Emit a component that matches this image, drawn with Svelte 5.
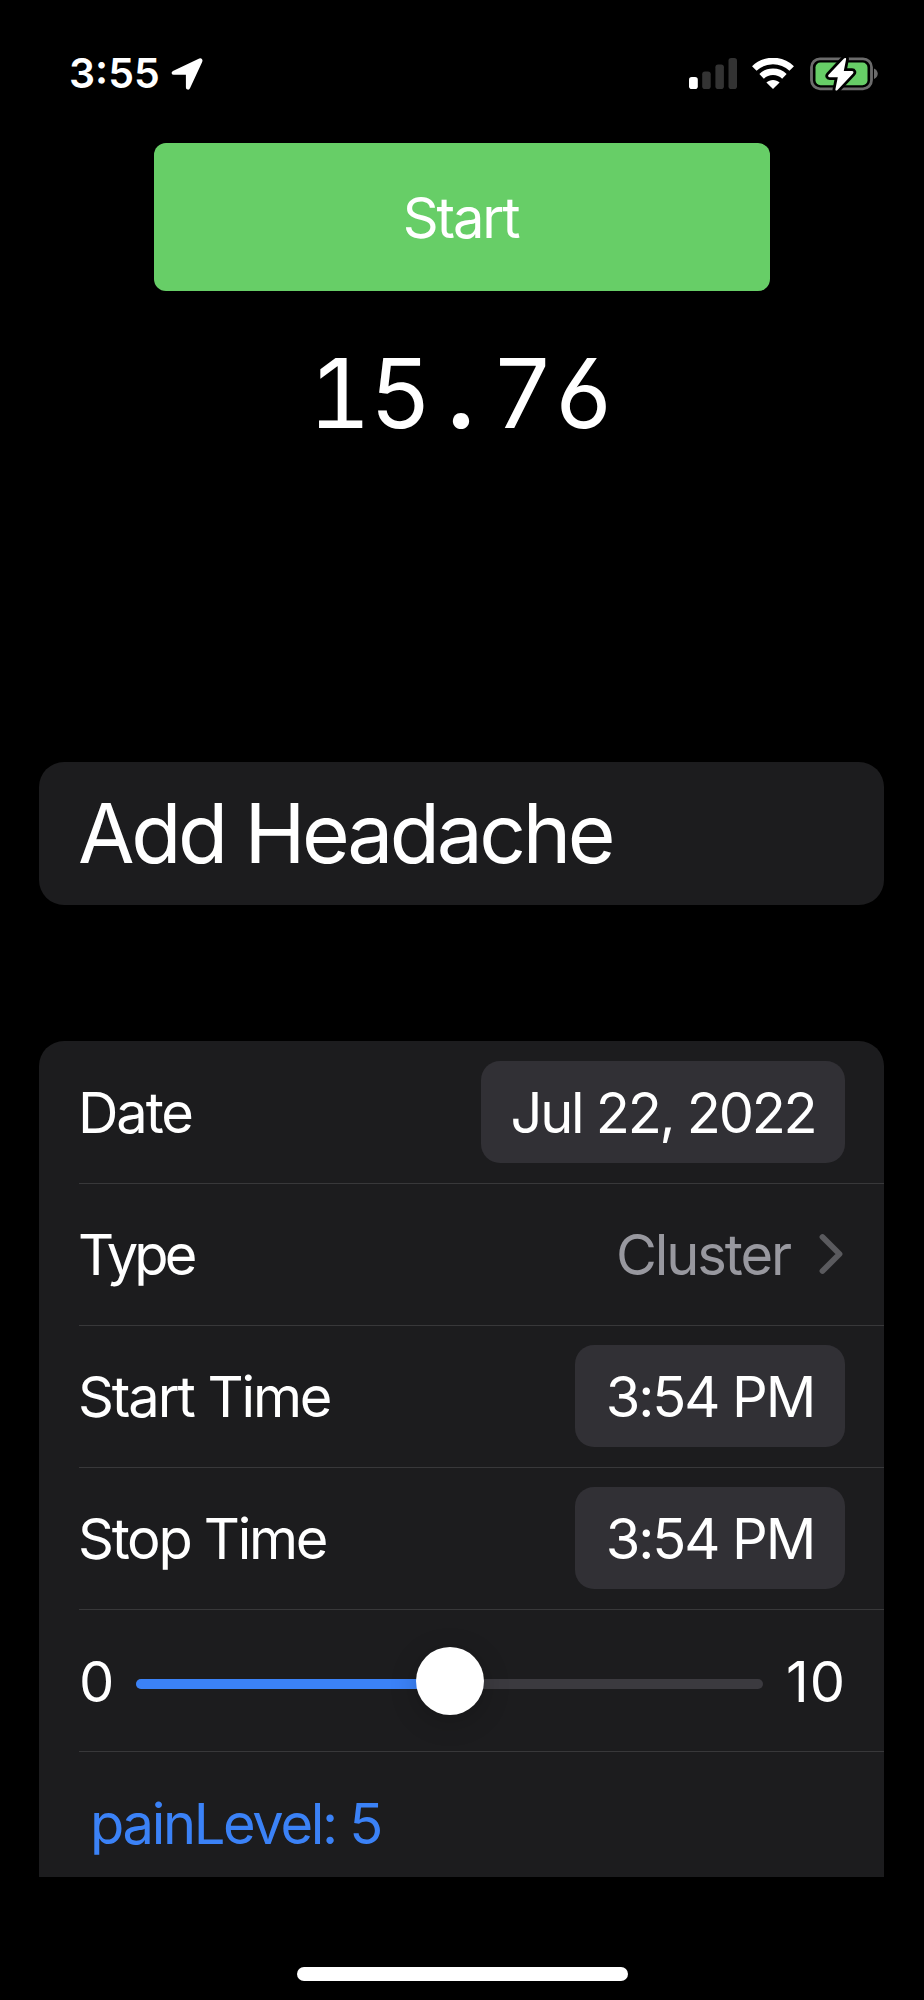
<script lang="ts">
  type Row = { label: string; value: string; kind: 'pill' | 'link'; cls: string };

  const rows: Row[] = [
    { label: 'Date', value: 'Jul 22, 2022', kind: 'pill', cls: 'date' },
    { label: 'Type', value: 'Cluster', kind: 'link', cls: 'type' },
    { label: 'Start Time', value: '3:54 PM', kind: 'pill', cls: 'time' },
    { label: 'Stop Time', value: '3:54 PM', kind: 'pill', cls: 'time stop' },
  ];

  const min = 0;
  const max = 10;
  const elapsed = '15.76';

  let painLevel = $state(5);
  let percent = $derived(((painLevel - min) / (max - min)) * 100);
</script>

<div class="screen">
  <header class="status-bar">
    <div class="status-left">
      <span class="clock">3:55</span>
      <svg class="location" viewBox="0 0 34 34" aria-hidden="true">
        <path
          d="M3.500 15.200 29.800 2.800c1-.4 1.700.3 1.300 1.300L18.800 30.800c-.4.900-1.600.7-1.600-.4V17.400a.9.900 0 0 0-.9-.9H3.800c-1.100 0-1.200-.9-.3-1.300z"
          stroke="#fff" stroke-width="2.600" stroke-linejoin="round"
        />
      </svg>
    </div>

    <div class="status-right">
      <svg class="signal" viewBox="0 0 48 32" aria-hidden="true">
        <rect x="0" y="19" width="8.800" height="12" rx="2.800" fill="#fff" />
        <rect x="13.200" y="13.500" width="8.500" height="17.500" rx="2.800" />
        <rect x="26.400" y="6.500" width="8.500" height="24.500" rx="2.800" />
        <rect x="39.500" y="0" width="8.500" height="31" rx="2.800" />
      </svg>

      <svg class="wifi" viewBox="0 0 42 32" aria-hidden="true">
        <path class="arc" d="M2.300 10.500a27 27 0 0 1 37.400 0" />
        <path class="arc" d="M9.600 18.300a16.500 16.500 0 0 1 22.800 0" />
        <path d="M21 31 14.400 24.600c3.600-3.500 9.600-3.500 13.200 0z" fill="#fff" />
      </svg>

      <svg class="battery" viewBox="0 0 68 36" aria-hidden="true">
        <rect x="1.500" y="2.800" width="60" height="30" rx="8.500" fill="none" stroke="#6b6b6b" stroke-width="2.800" />
        <rect x="5.500" y="6.500" width="52" height="22.800" rx="5" fill="#67ce67" />
        <path d="M64 12.500v10.500c5-2 5-8.500 0-10.500z" fill="#6b6b6b" />
        <path
          d="M34 2.500 18.600 18.800c-1 1.100-.4 2.400 1 2.400h8.200l-2.400 12c-.3 1.500 1.200 1.800 2.100.8L43 17.400c1-1.100.4-2.400-1-2.400h-8.200l2.300-11.700c.3-1.500-1.200-1.800-2.100-.8z"
          fill="#fff" stroke="#000" stroke-width="5.600" stroke-linejoin="round" paint-order="stroke"
        />
      </svg>
    </div>
  </header>

  <button class="start-btn">Start</button>

  <div class="timer">
    {#each elapsed as ch}
      <span class="digit" class:dot={ch === '.'}>{ch}</span>
    {/each}
  </div>

  <section class="card title-card">
    <h1>Add Headache</h1>
  </section>

  <section class="card form">
    {#each rows as row}
      <div class="row {row.cls}">
        <span class="label">{row.label}</span>
        {#if row.kind === 'pill'}
          <button class="pill">{row.value}</button>
        {:else}
          <span class="link">
            <span class="link-text">{row.value}</span>
            <svg class="chevron" viewBox="0 0 24 42" aria-hidden="true">
              <path d="M3.500 4 20.500 21 3.500 38" />
            </svg>
          </span>
        {/if}
      </div>
    {/each}

    <div class="row slider-row">
      <span class="min">{min}</span>
      <div class="slider">
        <div class="track"><div class="fill" style:width="{percent}%"></div></div>
        <div class="thumb" style:left="{percent}%"></div>
      </div>
      <span class="max">{max}</span>
    </div>

    <div class="row pain">painLevel: {painLevel}</div>
  </section>

  <div class="home-indicator"></div>
</div>

<style>
  :global(body) {
    background: #000;
  }

  .screen {
    width: 924px;
    height: 2000px;
    box-sizing: border-box;
    display: flex;
    flex-direction: column;
    align-items: center;
    overflow: hidden;
    background: #000;
    color: #fff;
    font-family: Inter, 'Liberation Sans', sans-serif;
    font-size: 56px;
    line-height: 1;
    letter-spacing: -2.100px;
    white-space: nowrap;
  }

  button {
    border: none;
    padding: 0;
    color: inherit;
    font: inherit;
    letter-spacing: inherit;
  }

  svg {
    display: block;
    flex-shrink: 0;
  }

  /* Status bar */
  .status-bar {
    width: 100%;
    height: 143px;
    box-sizing: border-box;
    padding: 53px 46px 0 69px;
    display: flex;
    justify-content: space-between;
    align-items: flex-start;
    flex-shrink: 0;
  }

  .status-left,
  .status-right {
    display: flex;
    align-items: center;
    height: 41px;
  }

  .clock {
    font-size: 41px;
    font-weight: 600;
    letter-spacing: 0;
  }

  .location {
    width: 34px;
    height: 34px;
    margin-left: 10px;
    fill: #fff;
  }

  .signal {
    width: 48px;
    height: 32px;
    fill: #333;
  }

  .wifi {
    width: 42px;
    height: 32px;
    margin-left: 15px;
  }

  .arc {
    fill: none;
    stroke: #fff;
    stroke-width: 6.500;
  }

  .battery {
    width: 68px;
    height: 36px;
    margin-left: 16px;
  }

  /* Stopwatch */
  .start-btn {
    width: 616px;
    height: 148px;
    padding: 2px 3px 0 0;
    border-radius: 12px;
    background: #67ce67;
    flex-shrink: 0;
  }

  .timer {
    display: flex;
    height: 100px;
    margin-top: 52px;
    margin-right: 2px;
    font-size: 96px;
    line-height: 100px;
    letter-spacing: 0;
    font-feature-settings: 'tnum', 'ss01';
  }

  .digit {
    width: 61px;
    text-align: center;
  }

  .dot {
    font-weight: 700;
  }

  /* Cards */
  .card {
    width: 845px;
    box-sizing: border-box;
    margin-right: 1px;
    border-radius: 25px;
    background: #1c1c1e;
    flex-shrink: 0;
  }

  .title-card {
    height: 143px;
    margin-top: 319px;
    padding-left: 39px;
    display: flex;
    align-items: center;
  }

  h1 {
    margin: 0;
    font-size: 82px;
    font-weight: 400;
    letter-spacing: -3.400px;
  }

  .form {
    height: 836px;
    margin-top: 136px;
    border-radius: 25px 25px 0 0;
    overflow: hidden;
  }

  .row {
    height: 142.200px;
    box-sizing: border-box;
    margin-left: 40px;
    padding-right: 39px;
    display: flex;
    align-items: center;
    justify-content: space-between;
  }

  .row:first-child {
    height: 141.500px;
  }

  .row + .row {
    border-top: 1px solid #38383a;
  }

  .label,
  .link-text {
    margin-left: -1px;
    padding-top: 2px;
  }

  .type .label {
    letter-spacing: -3.900px;
  }

  .stop .label {
    letter-spacing: -2.300px;
  }

  .pill {
    height: 102px;
    width: 270px;
    padding-top: 2px;
    border-radius: 19px;
    background: #313035;
  }

  .date .pill {
    width: 364px;
    letter-spacing: -2.300px;
  }

  .link {
    display: flex;
    align-items: center;
    color: #98989f;
  }

  .chevron {
    width: 24px;
    height: 42px;
    margin: 0 2px 0 29px;
    fill: none;
    stroke: #5a5a5e;
    stroke-width: 5.800;
    stroke-linecap: round;
    stroke-linejoin: round;
  }

  /* Slider */
  .min {
    width: 57px;
    padding-top: 2px;
    letter-spacing: 0;
  }

  .max {
    width: 59px;
    padding-top: 2px;
    letter-spacing: 1px;
  }

  .slider {
    position: relative;
    width: 627px;
    height: 68px;
    margin-right: auto;
    display: flex;
    align-items: center;
  }

  .track {
    width: 100%;
    height: 10px;
    margin-top: 6px;
    border-radius: 5px;
    background: #3b3a3f;
    overflow: hidden;
  }

  .fill {
    height: 100%;
    background: #3b82f7;
  }

  .thumb {
    position: absolute;
    top: 0;
    width: 68px;
    height: 68px;
    border-radius: 50%;
    background: #fff;
    transform: translateX(-50%);
    box-shadow: 0 6px 28px rgba(0, 0, 0, 0.2);
  }

  .pain {
    padding: 2px 0 0 11px;
    color: #3b82f7;
    justify-content: flex-start;
    letter-spacing: -2.300px;
  }

  .home-indicator {
    width: 331px;
    height: 14px;
    margin-top: 90px;
    border-radius: 7px;
    background: #fff;
    flex-shrink: 0;
  }
</style>
